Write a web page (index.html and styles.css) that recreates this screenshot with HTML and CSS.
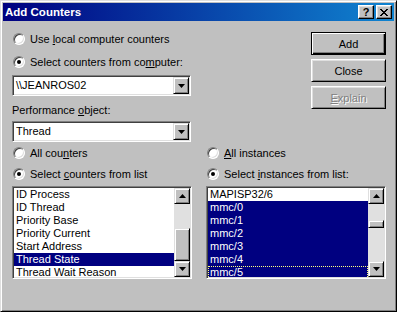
FILE: index.html
```html
<!DOCTYPE html>
<html lang="en">
<head>
<meta charset="UTF-8">
<title>Add Counters</title>
<link rel="stylesheet" href="styles.css">
</head>
<body>

<div class="window">
  <div class="titlebar">
    <span class="title">Add Counters</span>
    <div class="tb-buttons">
      <span class="tb-btn">?</span>
      <span class="tb-btn">
        <svg width="8" height="7" viewBox="0 0 8 7"><path d="M0 0h2v1h1v1h2v-1h1v-1h2v1h-1v1h-1v1h-1v1h1v1h1v1h1v1h-2v-1h-1v-1h-2v1h-1v1h-2v-1h1v-1h1v-1h1v-1h-1v-1h-1v-1h-1z" fill="#000"/></svg>
      </span>
    </div>
  </div>

  <div class="content">
    <div class="top">
      <div class="left">
        <div class="row"><span class="radio"></span><span>Use <u>l</u>ocal computer counters</span></div>
        <div class="row r2"><span class="radio checked"></span><span>Select counters from co<u>m</u>puter:</span></div>
        <div class="combo c1">
          <span class="combo-text">\\JEANROS02</span>
          <span class="drop"><svg width="7" height="4" viewBox="0 0 7 4"><path d="M0 0h7l-3.5 4z" fill="#000"/></svg></span>
        </div>
        <div class="row lbl"><span>Performance <u>o</u>bject:</span></div>
        <div class="combo c2">
          <span class="combo-text">Thread</span>
          <span class="drop"><svg width="7" height="4" viewBox="0 0 7 4"><path d="M0 0h7l-3.5 4z" fill="#000"/></svg></span>
        </div>
      </div>

      <div class="buttons">
        <div class="btn default">Add</div>
        <div class="btn">Close</div>
        <div class="btn disabled"><span><u>E</u>xplain</span></div>
      </div>
    </div>

    <div class="bottom">
      <div class="col">
        <div class="row"><span class="radio"></span><span>All cou<u>n</u>ters</span></div>
        <div class="row r4"><span class="radio checked"></span><span>Select <u>c</u>ounters from list</span></div>
        <div class="list">
          <div class="items">
            <div class="item">ID Process</div>
            <div class="item">ID Thread</div>
            <div class="item">Priority Base</div>
            <div class="item">Priority Current</div>
            <div class="item">Start Address</div>
            <div class="item sel">Thread State</div>
            <div class="item">Thread Wait Reason</div>
          </div>
          <div class="scroll">
            <div class="sb-btn"><svg width="7" height="4" viewBox="0 0 7 4"><path d="M3.5 0l3.5 4h-7z" fill="#000"/></svg></div>
            <div class="track"><div class="thumb" style="margin-top:24px;height:33px"></div></div>
            <div class="sb-btn"><svg width="7" height="4" viewBox="0 0 7 4"><path d="M0 0h7l-3.5 4z" fill="#000"/></svg></div>
          </div>
        </div>
      </div>

      <div class="col">
        <div class="row"><span class="radio"></span><span><u>A</u>ll instances</span></div>
        <div class="row r4"><span class="radio checked"></span><span>Select <u>i</u>nstances from list:</span></div>
        <div class="list">
          <div class="items">
            <div class="item">MAPISP32/6</div>
            <div class="item sel">mmc/0</div>
            <div class="item sel">mmc/1</div>
            <div class="item sel">mmc/2</div>
            <div class="item sel">mmc/3</div>
            <div class="item sel">mmc/4</div>
            <div class="item sel focus">mmc/5</div>
          </div>
          <div class="scroll">
            <div class="sb-btn"><svg width="7" height="4" viewBox="0 0 7 4"><path d="M3.5 0l3.5 4h-7z" fill="#000"/></svg></div>
            <div class="track"><div class="thumb" style="margin-top:16px;height:8px"></div></div>
            <div class="sb-btn"><svg width="7" height="4" viewBox="0 0 7 4"><path d="M0 0h7l-3.5 4z" fill="#000"/></svg></div>
          </div>
        </div>
      </div>
    </div>
  </div>
</div>

</body>
</html>
```

FILE: styles.css
```css
body {
  margin: 0;
  font-family: "Liberation Sans", Arial, sans-serif;
  font-size: 11px;
  color: #000;
}

.window {
  width: 397px;
  height: 312px;
  box-sizing: border-box;
  background: #c0c0c0;
  border: 1px solid;
  border-color: #dfdfdf #000 #000 #dfdfdf;
  box-shadow: inset 1px 1px #fff, inset -1px -1px #808080;
  padding: 2px;
}

.titlebar {
  height: 18px;
  display: flex;
  align-items: center;
  padding: 0 2px;
  background: linear-gradient(to right, #000080, #1084d0);
  color: #fff;
  font-weight: bold;
  font-size: 11.5px;
}

.title {
  flex: 1;
}

.tb-buttons {
  display: flex;
  gap: 2px;
}

.tb-btn {
  width: 16px;
  height: 14px;
  box-sizing: border-box;
  display: flex;
  align-items: center;
  justify-content: center;
  background: #c0c0c0;
  color: #000;
  font-size: 11px;
  border: 1px solid;
  border-color: #fff #000 #000 #fff;
  box-shadow: inset -1px -1px #808080, inset 1px 1px #dfdfdf;
}

.content {
  padding: 9px 8px 0 9px;
}

.top {
  display: flex;
  justify-content: space-between;
}

.left {
  width: 179px;
  display: flex;
  flex-direction: column;
}

.row {
  height: 18px;
  display: flex;
  align-items: center;
  white-space: nowrap;
}

.r2 { margin-top: 5px; }
.lbl { margin-top: 5px; }
.r4 { margin-top: 3px; }

.radio {
  width: 12px;
  height: 12px;
  box-sizing: border-box;
  margin: 0 5px 0 1px;
  border-radius: 50%;
  background: #fff;
  border: 1px solid;
  border-color: #808080 #fff #fff #808080;
  box-shadow: inset 1px 1px #404040, inset -1px -1px #dfdfdf;
  display: flex;
  align-items: center;
  justify-content: center;
}

.radio.checked::after {
  content: "";
  width: 4px;
  height: 4px;
  border-radius: 50%;
  background: #000;
}

.combo {
  height: 21px;
  box-sizing: border-box;
  display: flex;
  background: #fff;
  border: 1px solid;
  border-color: #808080 #fff #fff #808080;
  box-shadow: inset 1px 1px #404040, inset -1px -1px #dfdfdf;
  padding: 1px;
}

.c1 { margin-top: 4px; }
.c2 { margin-top: 2px; }

.combo-text {
  flex: 1;
  padding-left: 2px;
  line-height: 17px;
}

.drop,
.sb-btn {
  width: 16px;
  box-sizing: border-box;
  display: flex;
  align-items: center;
  justify-content: center;
  background: #c0c0c0;
  border: 1px solid;
  border-color: #dfdfdf #000 #000 #dfdfdf;
  box-shadow: inset 1px 1px #fff, inset -1px -1px #808080;
}

.buttons {
  width: 75px;
  display: flex;
  flex-direction: column;
  gap: 4px;
  padding-top: 2px;
}

.btn {
  height: 23px;
  box-sizing: border-box;
  display: flex;
  align-items: center;
  justify-content: center;
  background: #c0c0c0;
  border: 1px solid;
  border-color: #fff #000 #000 #fff;
  box-shadow: inset 1px 1px #dfdfdf, inset -1px -1px #808080;
}

.btn.default {
  border-color: #000;
  box-shadow: inset 1px 1px #fff, inset -1px -1px #000, inset -2px -2px #808080;
}

.btn.disabled {
  color: #808080;
  text-shadow: 1px 1px #fff;
}

.bottom {
  display: grid;
  grid-template-columns: 180px 180px;
  column-gap: 14px;
  margin-top: 2px;
}

.list {
  height: 93px;
  box-sizing: border-box;
  margin-top: 3px;
  display: flex;
  background: #fff;
  border: 1px solid;
  border-color: #808080 #fff #fff #808080;
  box-shadow: inset 1px 1px #404040, inset -1px -1px #dfdfdf;
  padding: 1px;
}

.items {
  flex: 1;
  overflow: hidden;
}

.item {
  height: 13px;
  line-height: 13px;
  padding-left: 2px;
  white-space: nowrap;
}

.item.sel {
  background: #000080;
  color: #fff;
}

.item.focus {
  outline: 1px dotted #ffff80;
  outline-offset: -1px;
}

.scroll {
  width: 16px;
  display: flex;
  flex-direction: column;
  background: #e0e0e0;
}

.sb-btn {
  height: 16px;
}

.track {
  flex: 1;
  display: flex;
  flex-direction: column;
}

.thumb {
  box-sizing: border-box;
  background: #c0c0c0;
  border: 1px solid;
  border-color: #dfdfdf #000 #000 #dfdfdf;
  box-shadow: inset 1px 1px #fff, inset -1px -1px #808080;
}
```
